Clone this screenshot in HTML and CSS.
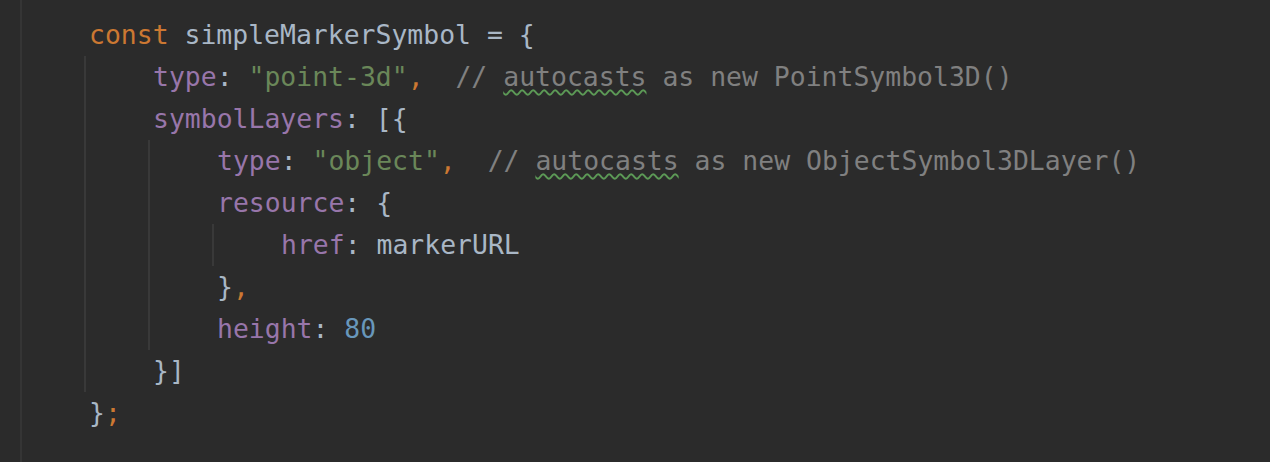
FILE: index.html
```html
<!DOCTYPE html>
<html>
<head>
<meta charset="utf-8">
<link rel="stylesheet" href="styles.css">
</head>
<body>
<div class="editor">
  <div class="root">
    <div class="ln"><span class="kw">const</span> simpleMarkerSymbol = {</div>
    <div class="blk">
      <div class="ln"><span class="pr">type</span>: <span class="st">"point-3d"</span><span class="kw">,</span>  <span class="cm">// <span class="typo">autocasts</span> as new PointSymbol3D()</span></div>
      <div class="ln"><span class="pr">symbolLayers</span>: [{</div>
      <div class="blk">
        <div class="ln"><span class="pr">type</span>: <span class="st">"object"</span><span class="kw">,</span>  <span class="cm">// <span class="typo">autocasts</span> as new ObjectSymbol3DLayer()</span></div>
        <div class="ln"><span class="pr">resource</span>: {</div>
        <div class="blk">
          <div class="ln"><span class="pr">href</span>: markerURL</div>
        </div>
        <div class="ln">}<span class="kw">,</span></div>
        <div class="ln"><span class="pr">height</span>: <span class="nm">80</span></div>
      </div>
      <div class="ln">}]</div>
    </div>
    <div class="ln">}<span class="kw">;</span></div>
  </div>
</div>
</body>
</html>
```

FILE: styles.css
```css
html, body {
  margin: 0;
  padding: 0;
  background: #2b2b2b;
}

.editor {
  height: 462px;
  overflow: hidden;
  font-family: "DejaVu Sans Mono", "Liberation Mono", monospace;
  font-size: 26.45px;
  line-height: 42px;
  color: #a9b7c6;
}

.root {
  margin-left: 20px;
  border-left: 2px solid #353535;
  padding-left: 3px;
  padding-top: 14px;
  height: 100%;
  box-sizing: border-box;
}

.blk {
  margin-left: 59px;
  border-left: 2px solid #393939;
  padding-left: 3px;
}

.ln {
  padding-left: 64px;
  white-space: pre;
  height: 42px;
}

.kw { color: #cc7832; }
.pr { color: #9876aa; }
.st { color: #6a8759; }
.cm { color: #808080; }
.nm { color: #6897bb; }

.typo {
  text-decoration: underline wavy #5c9a56;
  text-decoration-thickness: 1.6px;
  text-underline-offset: 3px;
}
```
